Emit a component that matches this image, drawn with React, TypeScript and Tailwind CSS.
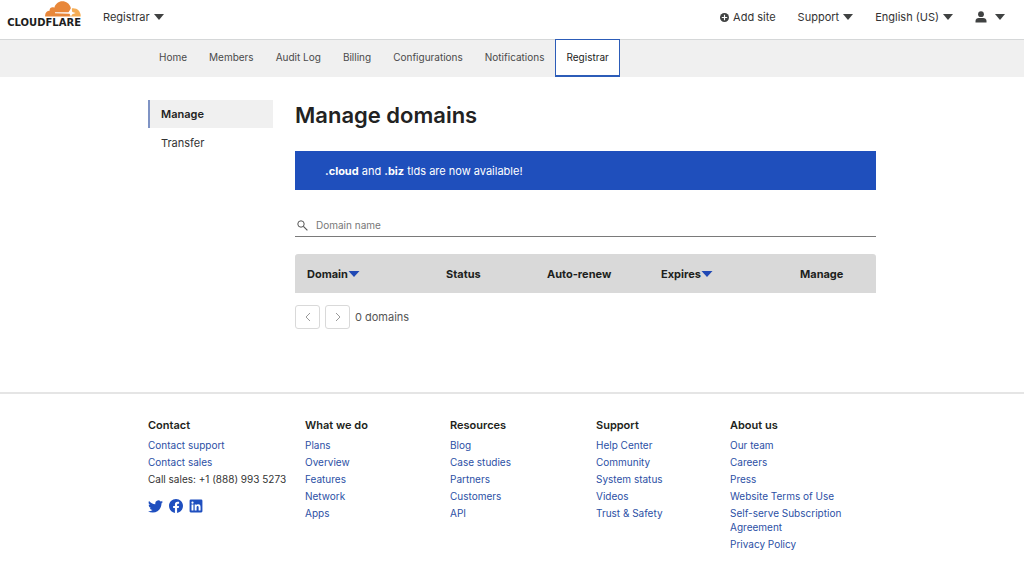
import React from "react";

const navItems = ["Home", "Members", "Audit Log", "Billing", "Configurations", "Notifications"];

const footerColumns = [
  { title: "What we do", links: ["Plans", "Overview", "Features", "Network", "Apps"] },
  { title: "Resources", links: ["Blog", "Case studies", "Partners", "Customers", "API"] },
  { title: "Support", links: ["Help Center", "Community", "System status", "Videos", "Trust & Safety"] },
  {
    title: "About us",
    links: ["Our team", "Careers", "Press", "Website Terms of Use", "Self-serve Subscription Agreement", "Privacy Policy"],
  },
];

function Caret() {
  return (
    <svg viewBox="0 0 10 6" aria-hidden="true" className="h-[6px] w-[10px] shrink-0 fill-[#404242]">
      <path d="M0 0h10L5 6z" />
    </svg>
  );
}

function SortArrow() {
  return (
    <svg viewBox="0 0 12 6" aria-hidden="true" className="h-[6px] w-[12px] shrink-0 fill-[#2049b5]">
      <path d="M.5 0h11L6 6z" />
    </svg>
  );
}

function Logo() {
  return (
    <a href="#" aria-label="Cloudflare" className="flex w-[76px] flex-col items-end gap-px text-[#1d1d1d]">
      <svg viewBox="0 0 36 16" aria-hidden="true" className="h-4 w-9">
        <path
          fill="#e8873a"
          d="M.2 15.600C-.4 12 2 9.800 4.600 9.700C4.300 7 7 5.300 9.300 6.700C10.500 2.800 13.600.3 17.300.3c4 0 7.200 2.500 8.400 6.200.3 1-.1 2-.1 3l-.8 6.100z"
        />
        <path fill="#f5ad55" d="M24.600 15.600l2.400-8.300c5-.6 8.900 3 8.700 8.300z" />
        <path fill="#fff" d="M10 11.300h13.500l2.800-4.400 1 4 3.400 1.200-3.400 1.200-1.400 2.200-1.400-2.800L10 12.300z" />
      </svg>
      <span className="font-['DejaVu_Sans',sans-serif] text-[10px] leading-[10px] font-bold">CLOUDFLARE</span>
    </a>
  );
}

function MenuButton({ children, label }: { children?: React.ReactNode; label?: string }) {
  return (
    <button type="button" aria-label={label} className="flex items-center gap-1">
      {children}
      <Caret />
    </button>
  );
}

function PageButton({ label, d }: { label: string; d: string }) {
  return (
    <button
      type="button"
      aria-label={label}
      className="flex h-6 w-[25px] items-center justify-center rounded-[3px] border border-[#d9d9d9] text-[#9a9a9a]"
    >
      <svg viewBox="0 0 6 10" aria-hidden="true" className="h-[10px] w-[6px] fill-none stroke-current">
        <path d={d} />
      </svg>
    </button>
  );
}

function TopBar() {
  return (
    <header className="flex h-10 items-start justify-between border-b border-[#d5d7d8] pr-[19px] pl-[5px]">
      <div className="flex gap-[22px]">
        <div className="pt-px">
          <Logo />
        </div>
        <div className="flex h-[34px] items-center">
          <MenuButton>Registrar</MenuButton>
        </div>
      </div>
      <div className="flex h-[34px] items-center gap-[22px]">
        <button type="button" className="flex items-center gap-1">
          <svg viewBox="0 0 10 10" aria-hidden="true" className="h-[9px] w-[9px]">
            <circle cx="5" cy="5" r="5" fill="#404242" />
            <path d="M5 2v6M2 5h6" stroke="#fff" strokeWidth="1.300" />
          </svg>
          Add site
        </button>
        <MenuButton>Support</MenuButton>
        <MenuButton>English (US)</MenuButton>
        <MenuButton label="Account">
          <svg viewBox="0 0 12 12" aria-hidden="true" className="mr-1 h-3 w-3 fill-[#404242]">
            <circle cx="6" cy="3.200" r="2.900" />
            <path d="M.5 11.500V10c0-2 1.500-3 3.300-3h4.400c1.800 0 3.300 1 3.300 3v1.500z" />
          </svg>
        </MenuButton>
      </div>
    </header>
  );
}

function SubNav() {
  return (
    <nav className="bg-[#f0f0f0] text-[10px]">
      <div className="mx-auto flex h-[37px] max-w-[728px] text-[#4a4a4a]">
        {navItems.map((item) => (
          <a key={item} href="#" className="flex items-center px-[11px] pb-[3px]">
            {item}
          </a>
        ))}
        <a
          href="#"
          aria-current="page"
          className="-mt-px flex items-center border border-b-2 border-[#2c5cb8] bg-white px-[10px] pb-px text-[#222]"
        >
          Registrar
        </a>
      </div>
    </nav>
  );
}

function DomainTable() {
  const cell = "px-3 text-left font-bold";
  return (
    <table className="mt-[17px] w-full table-fixed text-[11px] text-[#1d1f20]">
      <thead>
        <tr className="h-[39px] bg-[#d9d9d9]">
          <th scope="col" className={`${cell} w-[139px] rounded-tl-[3px]`}>
            <button type="button" className="flex items-center">
              Domain
              <SortArrow />
            </button>
          </th>
          <th scope="col" className={`${cell} w-[101px]`}>Status</th>
          <th scope="col" className={`${cell} w-[114px]`}>Auto-renew</th>
          <th scope="col" className={`${cell} w-[139px]`}>
            <button type="button" className="flex items-center">
              Expires
              <SortArrow />
            </button>
          </th>
          <th scope="col" className={`${cell} rounded-tr-[3px]`}>Manage</th>
        </tr>
      </thead>
    </table>
  );
}

function SocialLinks() {
  return (
    <div className="mt-[13px] flex gap-[6px] text-[#1f4fbf]">
      <a href="#" aria-label="Twitter">
        <svg viewBox="0 0 24 24" aria-hidden="true" className="h-[15px] w-[15px] fill-current">
          <path d="M23.953 4.570a10 10 0 01-2.825.775 4.958 4.958 0 002.163-2.723c-.951.555-2.005.959-3.127 1.184a4.920 4.920 0 00-8.384 4.482C7.690 8.095 4.067 6.130 1.640 3.162a4.822 4.822 0 00-.666 2.475c0 1.710.870 3.213 2.188 4.096a4.904 4.904 0 01-2.228-.616v.060a4.923 4.923 0 003.946 4.827 4.996 4.996 0 01-2.212.085 4.936 4.936 0 004.604 3.417 9.867 9.867 0 01-6.102 2.105c-.390 0-.779-.023-1.170-.067a13.995 13.995 0 007.557 2.209c9.053 0 13.998-7.496 13.998-13.985 0-.210 0-.420-.015-.630A9.935 9.935 0 0024 4.590z" />
        </svg>
      </a>
      <a href="#" aria-label="Facebook">
        <svg viewBox="0 0 24 24" aria-hidden="true" className="h-[14px] w-[14px] fill-current">
          <path d="M24 12.073c0-6.627-5.373-12-12-12s-12 5.373-12 12c0 5.990 4.388 10.954 10.125 11.854v-8.385H7.078v-3.470h3.047V9.430c0-3.007 1.792-4.669 4.533-4.669 1.312 0 2.686.235 2.686.235v2.953H15.830c-1.491 0-1.956.925-1.956 1.874v2.250h3.328l-.532 3.470h-2.796v8.385C19.612 23.027 24 18.062 24 12.073z" />
        </svg>
      </a>
      <a href="#" aria-label="LinkedIn">
        <svg viewBox="0 0 24 24" aria-hidden="true" className="h-[14px] w-[14px] fill-current">
          <path
            fillRule="evenodd"
            d="M3 1h18a2 2 0 012 2v18a2 2 0 01-2 2H3a2 2 0 01-2-2V3a2 2 0 012-2zM4.300 9.500v10.200h3.300V9.500zM6 4.400a1.900 1.900 0 100 3.800 1.900 1.900 0 000-3.800zM9.700 9.500v10.200H13v-5.100c0-1.400.4-2.500 1.900-2.500s1.600 1.400 1.600 2.600v5h3.300v-5.600c0-2.900-.8-4.900-3.900-4.900-1.500 0-2.500.8-2.900 1.600V9.500z"
          />
        </svg>
      </a>
    </div>
  );
}

function Footer() {
  return (
    <footer className="border-t-2 border-[#e5e5e5]">
      <div className="mx-auto grid max-w-[728px] grid-cols-[157fr_145fr_146fr_134fr_146fr] pt-[23px] pb-5 text-[10px] leading-[14px] text-[#2c50a5]">
        <section>
          <h2 className="text-[11px] leading-4 font-semibold text-[#1d1f20]">Contact</h2>
          <ul className="mt-[5px] flex flex-col gap-[3px] whitespace-nowrap">
            <li><a href="#">Contact support</a></li>
            <li><a href="#">Contact sales</a></li>
            <li className="text-[#333]">Call sales: +1 (888) 993 5273</li>
          </ul>
          <SocialLinks />
        </section>
        {footerColumns.map((col) => (
          <section key={col.title}>
            <h2 className="text-[11px] leading-4 font-semibold text-[#1d1f20]">{col.title}</h2>
            <ul className="mt-[5px] flex flex-col gap-[3px]">
              {col.links.map((link) => (
                <li key={link} className="max-w-[120px]"><a href="#">{link}</a></li>
              ))}
            </ul>
          </section>
        ))}
      </div>
    </footer>
  );
}

export default function App() {
  return (
    <div className="min-h-screen bg-white font-[Inter,sans-serif] text-[11px] leading-4 text-[#333]">
      <TopBar />
      <SubNav />
      <div className="mx-auto flex max-w-[728px] gap-[22px] pt-[23px] pb-[63px]">
        <aside className="w-[125px] shrink-0">
          <a href="#" aria-current="page" className="flex h-7 items-center border-l-2 border-[#7f93c4] bg-[#f0f0f0] pl-[11px] font-semibold text-[#222]">
            Manage
          </a>
          <a href="#" className="flex h-[30px] items-center pl-[13px]">Transfer</a>
        </aside>
        <main className="min-w-0 flex-1">
          <h1 className="text-[22px] leading-[30px] font-semibold text-[#222]">Manage domains</h1>
          <p className="mt-[21px] flex h-[39px] items-center bg-[#1f4fbc] px-[30px] text-[11px] text-white">
            <span>
              <strong className="font-bold">.cloud</strong> and <strong className="font-bold">.biz</strong> tlds are now available!
            </span>
          </p>
          <label className="mt-6 flex h-[23px] items-center gap-2 border-b border-[#7a7a7a] pl-[2px]">
            <svg viewBox="0 0 11 11" aria-hidden="true" className="h-[11px] w-[11px] fill-none stroke-[#555]">
              <circle cx="4" cy="4" r="3.200" strokeWidth="1" />
              <path d="M6.400 6.400l4 4" strokeWidth="1.200" />
            </svg>
            <input
              type="text"
              aria-label="Domain name"
              placeholder="Domain name"
              className="min-w-0 flex-1 bg-transparent text-[10px] outline-none placeholder:text-[#777]"
            />
          </label>
          <DomainTable />
          <div className="mt-3 flex items-center gap-[5px]">
            <PageButton label="Previous page" d="M5 1L1 5l4 4" />
            <PageButton label="Next page" d="M1 1l4 4-4 4" />
            <span className="text-[#555]">0 domains</span>
          </div>
        </main>
      </div>
      <Footer />
    </div>
  );
}
